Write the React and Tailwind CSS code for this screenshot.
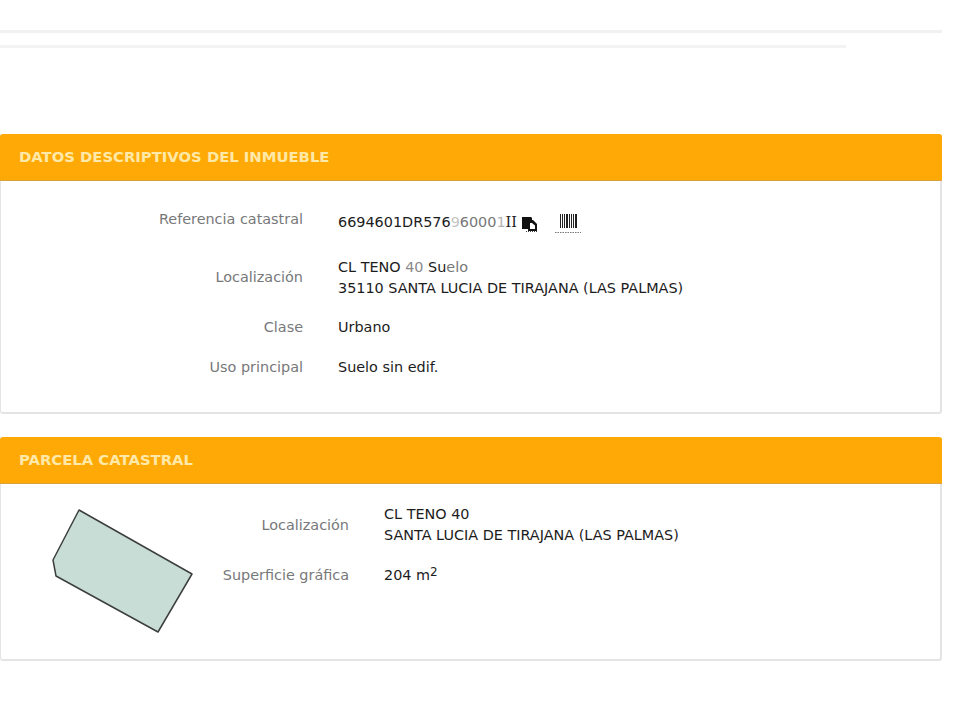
const Row = ({ label, labelWidth, className, children }) => (
  <div className={`flex items-center gap-[35px] ${className}`}>
    <div className="shrink-0 text-right text-[#77787a]" style={{ width: labelWidth }}>{label}</div>
    <div className="text-[#1c1c1c]">{children}</div>
  </div>
);

const Card = ({ title, className, children }) => (
  <section className={`w-[942px] rounded-[3px] border-b-2 border-r-2 border-l border-[#e4e4e4] bg-white ${className}`}>
    <h2 className="-ml-px -mr-[2px] flex h-[46px] items-center rounded-t-[3px] bg-[#ffa906] pl-[19px] text-[14.8px] font-bold text-[#ffe9a8] shadow-[0_1px_0_#d9a23c]">
      {title}
    </h2>
    {children}
  </section>
);

const Barcode = () => (
  <svg width="26" height="20" viewBox="0 0 26 20" className="ml-[18px]">
    <path d="M5 1h1v14H5zM7 1h1v14H7zM9 1h1v14H9zM11 1h2v14h-2zM14 1h1v14h-1zM16 1h1v14h-1zM18 1h1v14h-1zM20 1h2v14h-2z" fill="#222" />
    <path d="M0 19.500h26" stroke="#777" strokeWidth="1" strokeDasharray="1.500 1" />
  </svg>
);

const CopyIcon = () => (
  <svg width="15" height="15" viewBox="0 0 15 15" className="ml-[5px] mt-[2px]">
    <path d="M0 0h9l1 1v2H7v9H0z" fill="#111" />
    <path d="M6 3h5l4 4v7H6z" fill="#111" />
    <path d="M8 6h2l3 2.500V12H8z" fill="#fff" />
    <path d="M4 14.500h11" stroke="#444" strokeDasharray="1 1" />
  </svg>
);

export default function App() {
  return (
    <div className="min-h-[720px] bg-white pt-[30px] font-['DejaVu_Sans',Verdana,sans-serif] text-[14.4px]">
      <div className="h-[3px] w-[942px] bg-[#f1f1f1]" />
      <div className="mt-3 h-[3px] w-[846px] bg-[#f3f3f3]" />

      <Card title="DATOS DESCRIPTIVOS DEL INMUEBLE" className="mt-[86px] h-[280px]">
        <div className="pt-[28px]">
          <Row label="Referencia catastral" labelWidth={302} className="h-6">
            <div className="flex items-center pt-[6px]">
              <span>
                6694601DR576<span className="text-[#c4c4c4]">9</span><span className="text-[#777]">6000</span><span className="text-[#b5b5b5]">1</span>
                <span className="font-['DejaVu_Serif',serif]">II</span>
              </span>
              <CopyIcon />
              <Barcode />
            </div>
          </Row>
          <Row label="Localización" labelWidth={302} className="mt-[24px] leading-[21px]">
            <div className="pt-px">
              <div>CL TENO <span className="text-[#8a8a8a]">40</span> Su<span className="text-[#777]">elo</span></div>
              <div>35110 SANTA LUCIA DE TIRAJANA (LAS PALMAS)</div>
            </div>
          </Row>
          <Row label="Clase" labelWidth={302} className="mt-[18px] h-[21px]">Urbano</Row>
          <Row label="Uso principal" labelWidth={302} className="mt-[19px] h-[21px]">Suelo sin edif.</Row>
        </div>
      </Card>

      <Card title="PARCELA CATASTRAL" className="mt-[23px] h-[224px]">
        <div className="flex pt-[21px]">
          <svg width="150" height="130" viewBox="0 0 150 130" className="ml-[47px] shrink-0">
            <path d="M31 6 144 70 110 128 8 72 5 56Z" fill="#c8ddd5" stroke="#3c3f3e" strokeWidth="1.500" strokeLinejoin="round" />
          </svg>
          <div className="-ml-[197px] flex-1">
            <Row label="Localización" labelWidth={348} className="leading-[21px]">
              <div>
                <div>CL TENO 40</div>
                <div>SANTA LUCIA DE TIRAJANA (LAS PALMAS)</div>
              </div>
            </Row>
            <Row label="Superficie gráfica" labelWidth={348} className="mt-[19px] h-[21px]">
              <span>204 m<sup className="top-[-0.35em] text-[12px]">2</sup></span>
            </Row>
          </div>
        </div>
      </Card>
    </div>
  );
}
